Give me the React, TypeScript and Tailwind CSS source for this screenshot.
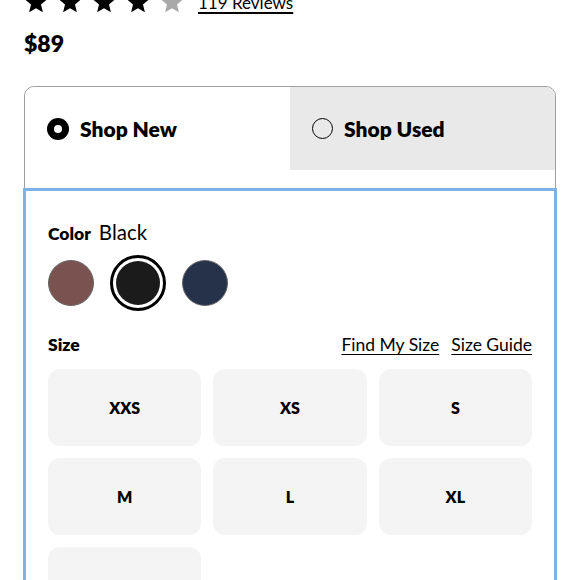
import React from 'react';

const SIZES = ['XXS', 'XS', 'S', 'M', 'L', 'XL', 'XXL'];

const COLORS = [
  { name: 'Brown', bg: 'bg-[#7a5350]' },
  { name: 'Black', bg: 'bg-[#1b1b1b]' },
  { name: 'Navy', bg: 'bg-[#25324a]' },
];

const Star = ({ filled }: { filled: boolean }) => (
  <svg width="24" height="23" viewBox="0 0 24 23" className={filled ? 'text-black' : 'text-[#a8a8a8]'}>
    <path
      fill="currentColor"
      d="M12 0.5l3.1 7.3 7.9 0.6-6 5.2 1.9 7.7L12 17.2l-6.9 4.1 1.9-7.7-6-5.2 7.9-0.6z"
    />
  </svg>
);

export default function App() {
  const selectedColor = 'Black';

  return (
    <div className="bg-white min-h-[580px] px-6 font-['Lato','Noto_Sans',sans-serif] text-black overflow-hidden">
      {/* Rating row */}
      <div className="flex items-center -mt-[9px] h-[23px]">
        <div className="flex gap-[10px]">
          {[0, 1, 2, 3, 4].map((i) => (
            <Star key={i} filled={i < 4} />
          ))}
        </div>
        <a href="#" className="ml-[14px] text-[17px] leading-none underline decoration-2 underline-offset-[3px]">
          119 Reviews
        </a>
      </div>

      <p className="mt-[16px] text-[23px] font-extrabold leading-[26px]">$89</p>

      {/* Purchase card */}
      <div className="mt-[30px] border border-[#a0a0a0] rounded-[10px]">
        <div className="grid grid-cols-2 h-[83px]">
          <button className="flex items-center gap-[11px] pl-[22px] bg-white rounded-tl-[10px]">
            <span className="w-[22px] h-[22px] rounded-full bg-black flex items-center justify-center">
              <span className="w-[8px] h-[8px] rounded-full bg-white" />
            </span>
            <span className="text-[21px] font-extrabold">Shop New</span>
          </button>
          <button className="flex items-center gap-[11px] pl-[22px] bg-[#e9e9e9] rounded-tr-[9px]">
            <span className="w-[21px] h-[21px] rounded-full border-[1.5px] border-black" />
            <span className="text-[21px] font-extrabold">Shop Used</span>
          </button>
        </div>

        <div className="mt-[18px] -mx-[2px] border-[3px] border-[#7db2e8] px-[22px] pt-[26px] pb-6">
          <div className="flex items-baseline gap-[8px]">
            <span className="text-[17.5px] font-extrabold">Color</span>
            <span className="text-[20.5px]">{selectedColor}</span>
          </div>

          <div className="flex items-center gap-[11px] mt-[7px] -ml-[5px]">
            {COLORS.map((c) =>
              c.name === selectedColor ? (
                <span
                  key={c.name}
                  className="w-[56px] h-[56px] rounded-full border-[3px] border-black p-[3px] flex"
                >
                  <span className={`flex-1 rounded-full ${c.bg}`} />
                </span>
              ) : (
                <span key={c.name} className="w-[56px] h-[56px] flex items-center justify-center">
                  <span className={`w-[46px] h-[46px] rounded-full border border-[#666] ${c.bg}`} />
                </span>
              )
            )}
          </div>

          <div className="flex items-center justify-between mt-[21px]">
            <span className="text-[17.5px] font-extrabold">Size</span>
            <div className="flex gap-[12px] text-[17.5px]">
              <a href="#" className="underline underline-offset-[3px]">Find My Size</a>
              <a href="#" className="underline underline-offset-[3px]">Size Guide</a>
            </div>
          </div>

          <div className="grid grid-cols-3 gap-[12px] mt-[11px]">
            {SIZES.map((s) => (
              <button
                key={s}
                className="h-[77px] rounded-[12px] bg-[#f4f4f4] text-[16px] font-extrabold"
              >
                {s}
              </button>
            ))}
          </div>
        </div>
      </div>
    </div>
  );
}
